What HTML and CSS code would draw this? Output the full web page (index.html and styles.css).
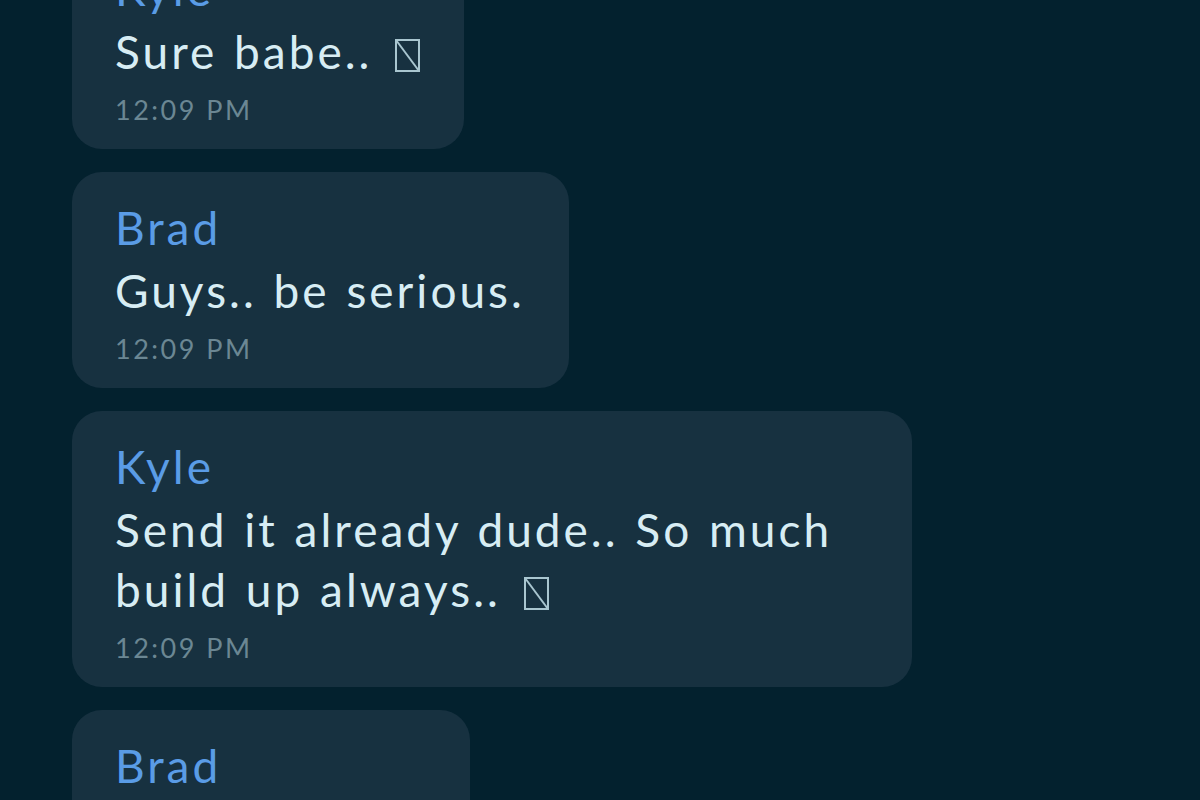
FILE: index.html
```html
<!DOCTYPE html>
<html lang="en">

<head>
  <meta charset="UTF-8">
  <meta name="viewport" content="width=device-width, initial-scale=1.0">
  <title>Group chat</title>
  <link rel="stylesheet" href="styles.css">
</head>

<body>
  <div class="chat">
    <div class="bubble">
      <div class="name">Kyle</div>
      <div class="text">Sure babe.. <svg class="tofu" viewBox="0 0 25 33"><rect x="1" y="1" width="23" height="31"/><line x1="1" y1="1" x2="24" y2="32"/></svg></div>
      <div class="time">12:09 PM</div>
    </div>

    <div class="bubble">
      <div class="name">Brad</div>
      <div class="text">Guys.. be serious.</div>
      <div class="time">12:09 PM</div>
    </div>

    <div class="bubble">
      <div class="name">Kyle</div>
      <div class="text">Send it already dude.. So much build up always.. <svg class="tofu" viewBox="0 0 25 33"><rect x="1" y="1" width="23" height="31"/><line x1="1" y1="1" x2="24" y2="32"/></svg></div>
      <div class="time">12:09 PM</div>
    </div>

    <div class="bubble">
      <div class="name">Brad</div>
      <div class="text">Here it goes..</div>
      <div class="time">12:10 PM</div>
    </div>
  </div>
</body>

</html>
```

FILE: styles.css
```css
body {
  margin: 0;
  height: 800px;
  overflow: hidden;
  background-color: #03212e;
  font-family: Lato, 'Noto Sans', sans-serif;
}

.chat {
  display: flex;
  flex-direction: column;
  align-items: flex-start;
  gap: 23px;
  margin-top: -67px;
  padding-left: 72px;
}

.bubble {
  background-color: #173140;
  border-radius: 30px;
  padding: 26px 44px 11px 43px;
  max-width: 840px;
  box-sizing: border-box;
}

.name {
  color: #5a9ce6;
  font-size: 46px;
  letter-spacing: 3px;
  line-height: 60px;
  margin-bottom: 3px;
}

.text {
  color: #d7edf4;
  font-size: 46px;
  letter-spacing: 3px;
  word-spacing: 2px;
  line-height: 60px;
}

.time {
  color: #6b8793;
  font-size: 27px;
  letter-spacing: 2.5px;
  line-height: 56px;
}

.tofu {
  width: 25px;
  height: 33px;
  margin-left: 6px;
  vertical-align: -3px;
  fill: none;
  stroke: #a9c6d0;
  stroke-width: 2;
}
```
